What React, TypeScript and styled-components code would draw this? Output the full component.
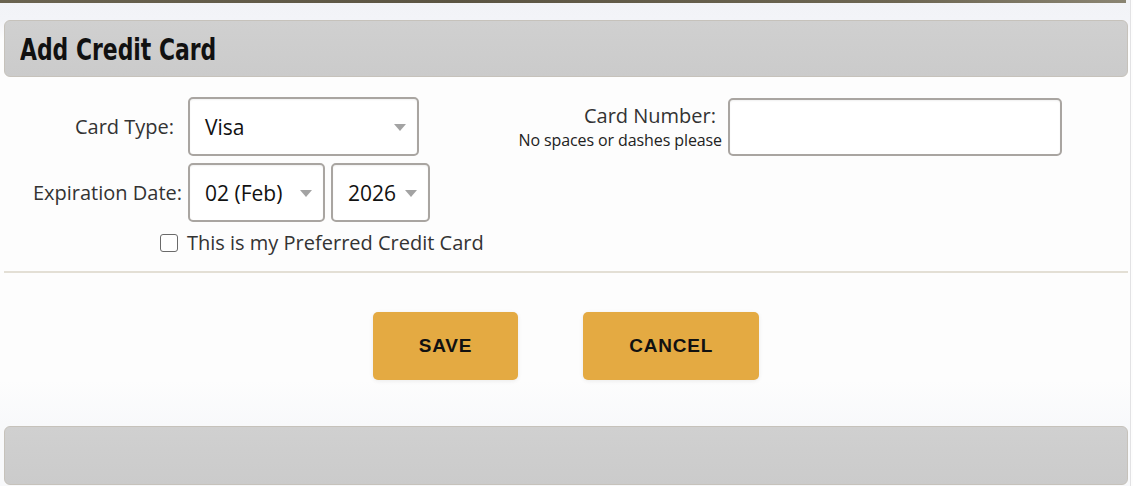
import React from "react";
import styled, { createGlobalStyle } from "styled-components";

const Global = createGlobalStyle`
  html, body { margin: 0; padding: 0; background: #fdfdfd; }
  body { font-family: "Open Sans", "DejaVu Sans", sans-serif; color: #333; }
  * { box-sizing: border-box; }
`;

const Page = styled.div`
  width: 1131px;
  height: 486px;
  display: flex;
  flex-direction: column;
  border-right: 1px solid #e2e2e4;
  background: linear-gradient(#f2f3f7 0px, #f3f4f8 20px, #fdfdfd 40px, #fdfdfd 380px, #f8f9fb 425px);
  overflow: hidden;
`;

const TopStrip = styled.div`
  flex: none;
  height: 3px;
  margin: 0 4px 0 0;
  background: linear-gradient(90deg, #6a6350, #5b5442 40%, #6d6652 80%, #8a8472);
`;

const Shell = styled.div`
  flex: none;
  display: flex;
  flex-direction: column;
  padding: 17px 2px 0 4px;
`;

const Bar = styled.div<{ $h: number }>`
  height: ${(p) => p.$h}px;
  flex: none;
  border: 1px solid #c6c2bb;
  border-radius: 6px;
  background: linear-gradient(#d0d0d0, #cbcbcb);
  display: flex;
  align-items: center;
  padding-left: 15px;
`;

const Title = styled.h1`
  margin: 0;
  font-family: "Liberation Sans Narrow", "DejaVu Sans Condensed", "Liberation Sans", sans-serif;
  font-weight: 700;
  font-size: 31px;
  color: #111;
  transform: scaleX(0.785);
  transform-origin: left center;
`;

const Form = styled.div`
  display: flex;
  padding-top: 20px;
`;

const LeftGroup = styled.div`
  width: 492px;
  display: grid;
  grid-template-columns: 178px auto;
  column-gap: 6px;
  row-gap: 7px;
  align-items: center;
  justify-items: start;
`;

const Label = styled.div<{ $pr?: number }>`
  justify-self: end;
  font-size: 20px;
  color: #333;
  padding-right: ${(p) => p.$pr ?? 0}px;
  white-space: nowrap;
`;

const Controls = styled.div`
  display: flex;
  gap: 6px;
`;

const Select = styled.div<{ $w: number }>`
  width: ${(p) => p.$w}px;
  height: 59px;
  border: 2px solid #a9a5a1;
  border-radius: 5px;
  background: #fff;
  box-shadow: inset 0 1px 2px rgba(0, 0, 0, 0.06);
  display: flex;
  align-items: center;
  justify-content: space-between;
  padding: 0 11px 0 15px;
  font-size: 21px;
  color: #111;
`;

const Arrow = styled.span`
  width: 0;
  height: 0;
  border-left: 6px solid transparent;
  border-right: 6px solid transparent;
  border-top: 7px solid #a3a3a3;
  margin-top: 1px;
`;

const CheckRow = styled.label`
  grid-column: 1 / -1;
  margin-left: 156px;
  display: flex;
  align-items: center;
  gap: 9px;
  font-size: 20px;
  color: #333;
`;

const Box = styled.span`
  width: 18px;
  height: 18px;
  border: 1.5px solid #6a6a6a;
  border-radius: 3px;
  background: #fff;
`;

const RightGroup = styled.div`
  display: flex;
  align-items: flex-start;
`;

const NumLabel = styled.div`
  width: 226px;
  height: 58px;
  margin-top: 1px;
  display: flex;
  flex-direction: column;
  justify-content: center;
  align-items: flex-end;
  gap: 1px;
`;

const NumTitle = styled.div`
  font-size: 20px;
  line-height: 24px;
  color: #333;
  padding-right: 6px;
`;

const Hint = styled.div`
  font-size: 16px;
  line-height: 22px;
  color: #222;
  letter-spacing: -0.1px;
  white-space: nowrap;
`;

const Input = styled.div`
  margin-left: 6px;
  margin-top: 1px;
  width: 334px;
  height: 58px;
  border: 2px solid #a9a5a1;
  border-radius: 5px;
  background: #fff;
  box-shadow: inset 0 1px 2px rgba(0, 0, 0, 0.06);
`;

const Divider = styled.hr`
  margin: 15px 0 0;
  border: none;
  height: 2px;
  background: #e3dfd5;
`;

const Actions = styled.div`
  display: flex;
  justify-content: center;
  gap: 65px;
  padding-top: 39px;
  height: 153px;
`;

const Button = styled.button`
  height: 68px;
  padding: 0 46px;
  border: none;
  border-radius: 5px;
  background: #e4aa42;
  box-shadow: 0 1px 4px rgba(0, 0, 0, 0.08);
  font-family: "Liberation Sans", Arial, sans-serif;
  font-weight: 700;
  font-size: 19px;
  letter-spacing: 0.8px;
  color: #111;
`;

export default function App() {
  return (
    <>
      <Global />
      <Page>
        <TopStrip />
        <Shell>
          <Bar $h={57}>
            <Title>Add Credit Card</Title>
          </Bar>
          <Form>
            <LeftGroup>
              <Label $pr={8}>Card Type:</Label>
              <Select $w={231}>
                <span>Visa</span>
                <Arrow />
              </Select>
              <Label>Expiration Date:</Label>
              <Controls>
                <Select $w={137}>
                  <span>02 (Feb)</span>
                  <Arrow />
                </Select>
                <Select $w={99}>
                  <span>2026</span>
                  <Arrow />
                </Select>
              </Controls>
              <CheckRow>
                <Box />
                This is my Preferred Credit Card
              </CheckRow>
            </LeftGroup>
            <RightGroup>
              <NumLabel>
                <NumTitle>Card Number:</NumTitle>
                <Hint>No spaces or dashes please</Hint>
              </NumLabel>
              <Input />
            </RightGroup>
          </Form>
          <Divider />
          <Actions>
            <Button>SAVE</Button>
            <Button>CANCEL</Button>
          </Actions>
          <Bar $h={59} />
        </Shell>
      </Page>
    </>
  );
}
